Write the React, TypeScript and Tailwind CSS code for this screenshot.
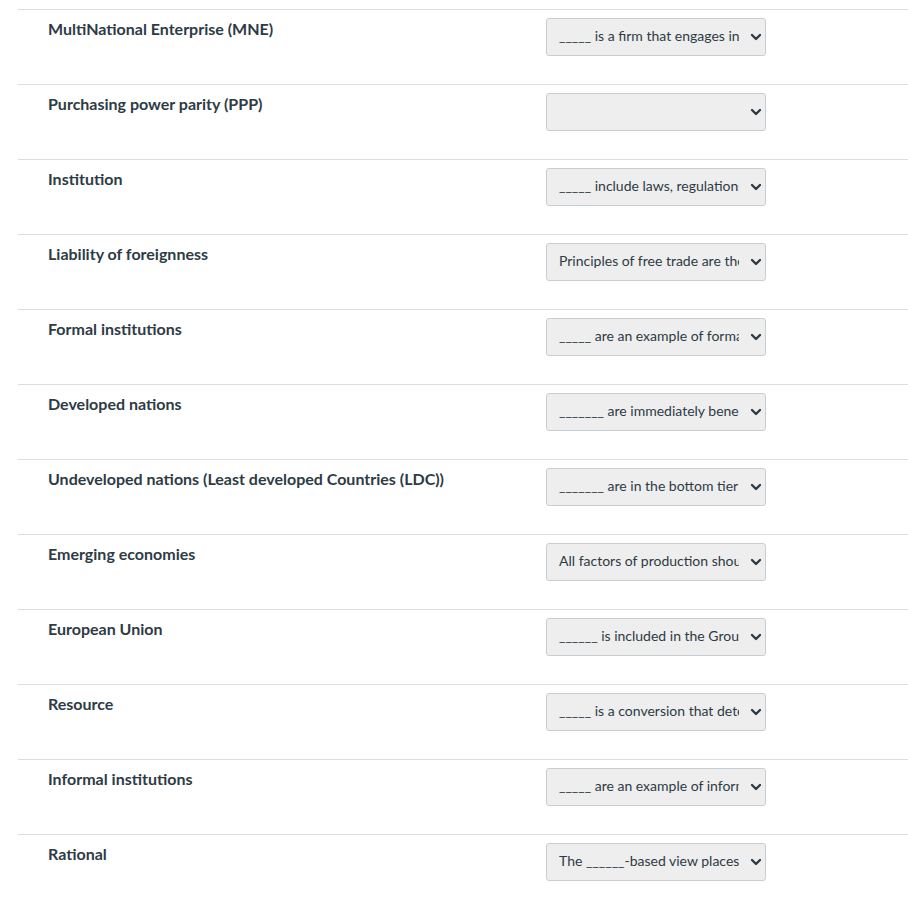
import { ChevronDown } from "lucide-react";

type Row = {
  term: string;
  answer: string;
};

const rows: Array<Row> = [
  { term: "MultiNational Enterprise (MNE)", answer: "_____ is a firm that engages in foreign direct investment" },
  { term: "Purchasing power parity (PPP)", answer: "" },
  { term: "Institution", answer: "_____ include laws, regulations and rules" },
  { term: "Liability of foreignness", answer: "Principles of free trade are the basis of this" },
  { term: "Formal institutions", answer: "_____ are an example of formal institutions" },
  { term: "Developed nations", answer: "_______ are immediately beneficial" },
  { term: "Undeveloped nations (Least developed Countries (LDC))", answer: "_______ are in the bottom tier of the world" },
  { term: "Emerging economies", answer: "All factors of production should be considered" },
  { term: "European Union", answer: "______ is included in the Group of 20" },
  { term: "Resource", answer: "_____ is a conversion that determines" },
  { term: "Informal institutions", answer: "_____ are an example of informal institutions" },
  { term: "Rational", answer: "The ______-based view places emphasis" },
];

const MatchRow = ({ row }: { row: Row }) => {
  return (
    <div className="flex h-[75px] border-t border-[#dddddd]">
      <div className="w-[528px] pl-[30px] pt-[7px] text-[16px] leading-[24px] font-bold text-[#2d3b45]">
        {row.term}
      </div>
      <div className="pt-[8px]">
        <div className="relative w-[220px]">
          <select
            defaultValue="a"
            className="appearance-none w-[220px] h-[38px] pl-[12px] pr-[26px] pb-[3px] bg-[#eeeeee] border border-[#c7cdd1] rounded-[3px] text-[14px] text-[#2d3b45] outline-none"
            style={{ fontFamily: "Lato, sans-serif" }}
          >
            <option value="a">{row.answer}</option>
          </select>
          <ChevronDown
            className="absolute right-[2px] top-[11px] w-[16px] h-[16px] text-[#2d3b45] pointer-events-none"
            strokeWidth={3.6}
          />
        </div>
      </div>
    </div>
  );
};

export default function App() {
  return (
    <div className="bg-white min-h-[899px] pt-[9px] pl-[18px]" style={{ fontFamily: "Lato, sans-serif" }}>
      {rows.map((row) => (
        <MatchRow row={row} key={row.term} />
      ))}
    </div>
  );
}
